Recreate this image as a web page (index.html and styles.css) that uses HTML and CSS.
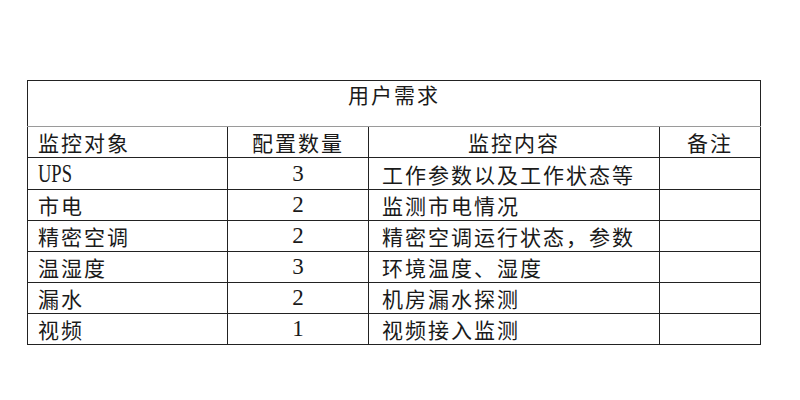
FILE: index.html
```html
<!DOCTYPE html>
<html lang="zh">
<head>
<meta charset="utf-8">
<title>用户需求</title>
<link rel="stylesheet" href="styles.css">
</head>
<body>
<div class="page">
  <table class="req">
    <colgroup>
      <col class="c1"><col class="c2"><col class="c3"><col class="c4">
    </colgroup>
    <tr class="r-title">
      <td colspan="4" class="title">用户需求</td>
    </tr>
    <tr class="r-head soft">
      <td class="left">监控对象</td>
      <td class="center">配置数量</td>
      <td class="center">监控内容</td>
      <td class="center">备注</td>
    </tr>
    <tr>
      <td class="left"><span class="latin">UPS</span></td>
      <td class="center num">3</td>
      <td class="content">工作参数以及工作状态等</td>
      <td></td>
    </tr>
    <tr class="soft">
      <td class="left">市电</td>
      <td class="center num">2</td>
      <td class="content">监测市电情况</td>
      <td></td>
    </tr>
    <tr>
      <td class="left">精密空调</td>
      <td class="center num">2</td>
      <td class="content">精密空调运行状态，参数</td>
      <td></td>
    </tr>
    <tr class="soft">
      <td class="left">温湿度</td>
      <td class="center num">3</td>
      <td class="content">环境温度、湿度</td>
      <td></td>
    </tr>
    <tr>
      <td class="left">漏水</td>
      <td class="center num">2</td>
      <td class="content">机房漏水探测</td>
      <td></td>
    </tr>
    <tr>
      <td class="left">视频</td>
      <td class="center num">1</td>
      <td class="content">视频接入监测</td>
      <td></td>
    </tr>
  </table>
</div>
</body>
</html>
```

FILE: styles.css
```css
html, body {
  margin: 0;
  padding: 0;
  background: #ffffff;
}

.page {
  padding: 80px 0 0 27px;
}

.req {
  border-collapse: collapse;
  table-layout: fixed;
  width: 733px;
  font-family: "Noto Sans CJK SC", "Noto Sans CJK JP", sans-serif;
  font-size: 21px;
  letter-spacing: 2px;
  color: #1a1a1a;
}

.c1 { width: 200px; }
.c2 { width: 141px; }
.c3 { width: 291px; }
.c4 { width: 101px; }

.req td {
  border: 1px solid #222222;
  height: 30px;
  padding: 0;
  line-height: 30px;
  vertical-align: middle;
  white-space: nowrap;
  overflow: hidden;
}

.req tr.soft td {
  border-top-color: #9a9a9a;
}

.req td.title {
  height: 45px;
  line-height: 26px;
  vertical-align: top;
  text-align: center;
  padding-top: 0;
  border-bottom-color: #9a9a9a;
}

.left {
  text-align: left;
  padding-left: 10px !important;
}

.center {
  text-align: center;
}

.content {
  text-align: left;
  padding-left: 13px !important;
}

.num {
  font-family: "Liberation Serif", serif;
  font-size: 23px;
  letter-spacing: 0;
}

.latin {
  display: inline-block;
  font-family: "Liberation Serif", serif;
  font-size: 25px;
  letter-spacing: 0;
  transform: scaleX(0.74);
  transform-origin: left center;
}
```
